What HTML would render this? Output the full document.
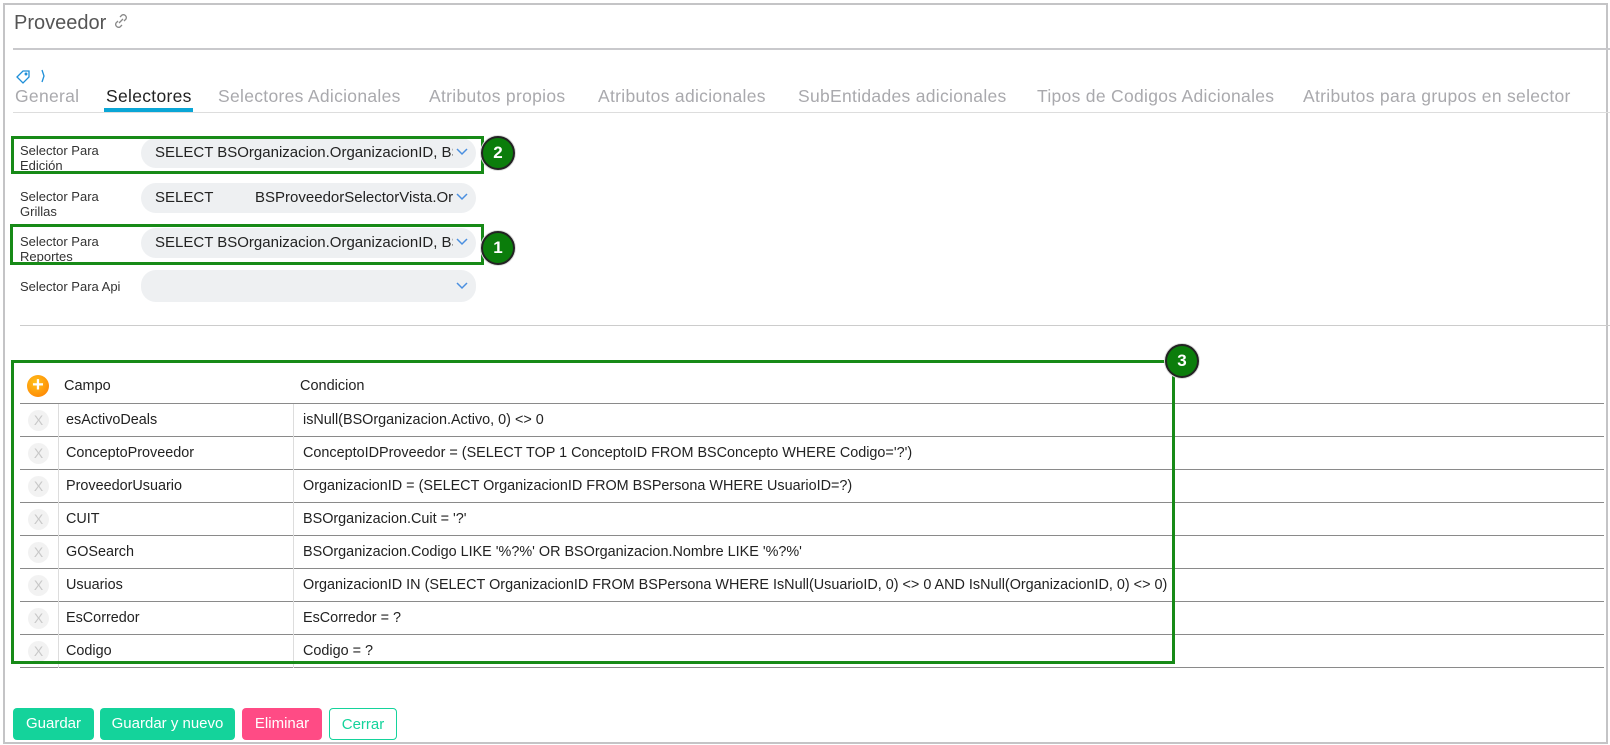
<!DOCTYPE html>
<html><head><meta charset="utf-8"><style>
*{box-sizing:border-box;margin:0;padding:0}
body{width:1610px;height:745px;background:#fff;font-family:"Liberation Sans",sans-serif;position:relative;overflow:hidden}
.abs{position:absolute}
.outer{left:3px;top:3px;width:1605px;height:741px;border:2px solid #c4c4c6;border-right:2px solid #c4c4c6}
.tab{position:absolute;top:86px;font-size:17.5px;color:#a9a9ad;white-space:nowrap;letter-spacing:0.3px}
.lbl{position:absolute;left:20px;font-size:13px;color:#333;line-height:15px}
.pill{position:absolute;left:141px;width:335px;height:30px;background:#eef0f2;border-radius:15px;font-size:15px;color:#222;line-height:30px;padding-left:14px;overflow:hidden;white-space:nowrap}
.pill svg{position:absolute;right:8px;top:10px}
.pill .t{display:block;width:298px;overflow:hidden}
.gbox{position:absolute;border:3px solid #178a17}
.num{position:absolute;width:34px;height:34px;border-radius:50%;background:#0b7d0b;border:2px solid #222;box-shadow:0 0 0 1px #ddd;color:#fff;font-weight:bold;font-size:17px;text-align:center;line-height:30px}
.row{position:absolute;left:20px;width:1584px;height:33px;border-bottom:1px solid #8a8a8a;font-size:14.4px;color:#222}
.row .x{position:absolute;left:8px;top:6px;width:21px;height:21px;border-radius:50%;background:#f2f2f2;color:#c8c8c8;font-size:14px;text-align:center;line-height:21px}
.row .c1{position:absolute;left:46px;top:8px}
.row .c2{position:absolute;left:283px;top:8px;white-space:nowrap}
.row .s1{position:absolute;left:38px;top:0;height:33px;border-left:1px solid #ddd}
.row .s2{position:absolute;left:273px;top:0;height:33px;border-left:1px solid #ddd}
.btn{position:absolute;top:708px;height:32px;border-radius:4px;color:#fff;font-size:15px;line-height:32px;text-align:center}
</style></head><body>
<div class="abs outer"></div>
<div class="abs" style="left:14px;top:12px;font-size:20px;color:#555">Proveedor</div>
<svg class="abs" style="left:112px;top:12px" width="18" height="18" viewBox="0 0 18 18" fill="none" stroke="#888" stroke-width="1.3"><path d="M7 11l4-4M8 5l2-2a3 3 0 0 1 4 4l-2 2M10 13l-2 2a3 3 0 0 1-4-4l2-2"/></svg>
<div class="abs" style="left:13px;top:48px;width:1597px;height:2px;background:#c9c9cc"></div>
<svg class="abs" style="left:15px;top:68px" width="32" height="16" viewBox="0 0 32 16" fill="none" stroke="#1e8fd8" stroke-width="1.3"><path d="M2 9l6-6h6v6l-6 6z"/><circle cx="11" cy="6" r="0.8"/><path d="M27 2l2 6-2 6"/></svg>
<div class="tab" style="left:15px">General</div>
<div class="tab" style="left:106px;color:#222">Selectores</div>
<div class="abs" style="left:104px;top:108px;width:89px;height:4px;background:#0aa6d6"></div>
<div class="tab" style="left:218px">Selectores Adicionales</div>
<div class="tab" style="left:429px">Atributos propios</div>
<div class="tab" style="left:598px">Atributos adicionales</div>
<div class="tab" style="left:798px">SubEntidades adicionales</div>
<div class="tab" style="left:1037px">Tipos de Codigos Adicionales</div>
<div class="tab" style="left:1303px">Atributos para grupos en selector</div>
<div class="abs" style="left:13px;top:112px;width:1597px;height:1px;background:#ddd"></div>

<div class="lbl" style="top:143px">Selector Para<br>Edición</div>
<div class="pill" style="top:138px"><span class="t">SELECT BSOrganizacion.OrganizacionID, BSOrganizacion</span><svg width="12" height="8" viewBox="0 0 12 8" fill="none" stroke="#4a8fe0" stroke-width="1.5"><path d="M1 1l5 5 5-5"/></svg></div>
<div class="lbl" style="top:189px">Selector Para<br>Grillas</div>
<div class="pill" style="top:183px"><span class="t">SELECT&nbsp;&nbsp;&nbsp;&nbsp;&nbsp;&nbsp;&nbsp;&nbsp;&nbsp;&nbsp;BSProveedorSelectorVista.Organizacion</span><svg width="12" height="8" viewBox="0 0 12 8" fill="none" stroke="#4a8fe0" stroke-width="1.5"><path d="M1 1l5 5 5-5"/></svg></div>
<div class="lbl" style="top:234px">Selector Para<br>Reportes</div>
<div class="pill" style="top:228px"><span class="t">SELECT BSOrganizacion.OrganizacionID, BSOrganizacion</span><svg width="12" height="8" viewBox="0 0 12 8" fill="none" stroke="#4a8fe0" stroke-width="1.5"><path d="M1 1l5 5 5-5"/></svg></div>
<div class="lbl" style="top:279px">Selector Para Api</div>
<div class="pill" style="top:270px;height:32px"><span class="t"></span><svg width="12" height="8" viewBox="0 0 12 8" fill="none" stroke="#4a8fe0" stroke-width="1.5" style="top:12px"><path d="M1 1l5 5 5-5"/></svg></div>

<div class="gbox" style="left:11px;top:136px;width:473px;height:38px"></div>
<div class="num" style="left:481px;top:136px">2</div>
<div class="gbox" style="left:10px;top:224px;width:474px;height:41px"></div>
<div class="num" style="left:481px;top:231px">1</div>

<div class="abs" style="left:20px;top:325px;width:1590px;height:1px;background:#ccc"></div>

<div class="abs" style="left:27px;top:375px;width:22px;height:22px;border-radius:50%;background:radial-gradient(circle at 40% 35%,#ffc21a,#ff7a00);color:#fff;font-size:20px;line-height:21px;text-align:center;font-weight:bold">+</div>
<div class="abs" style="left:64px;top:378px;font-size:14.5px;color:#222">Campo</div>
<div class="abs" style="left:300px;top:378px;font-size:14.5px;color:#222">Condicion</div>
<div class="abs" style="left:20px;top:403px;width:1584px;height:1px;background:#8a8a8a"></div>

<div class="row" style="top:404px"><span class="x">X</span><span class="s1"></span><span class="c1">esActivoDeals</span><span class="s2"></span><span class="c2">isNull(BSOrganizacion.Activo, 0) &lt;&gt; 0</span></div>
<div class="row" style="top:437px"><span class="x">X</span><span class="s1"></span><span class="c1">ConceptoProveedor</span><span class="s2"></span><span class="c2">ConceptoIDProveedor = (SELECT TOP 1 ConceptoID FROM BSConcepto WHERE Codigo='?')</span></div>
<div class="row" style="top:470px"><span class="x">X</span><span class="s1"></span><span class="c1">ProveedorUsuario</span><span class="s2"></span><span class="c2">OrganizacionID = (SELECT OrganizacionID FROM BSPersona WHERE UsuarioID=?)</span></div>
<div class="row" style="top:503px"><span class="x">X</span><span class="s1"></span><span class="c1">CUIT</span><span class="s2"></span><span class="c2">BSOrganizacion.Cuit = '?'</span></div>
<div class="row" style="top:536px"><span class="x">X</span><span class="s1"></span><span class="c1">GOSearch</span><span class="s2"></span><span class="c2">BSOrganizacion.Codigo LIKE '%?%' OR BSOrganizacion.Nombre LIKE '%?%'</span></div>
<div class="row" style="top:569px"><span class="x">X</span><span class="s1"></span><span class="c1">Usuarios</span><span class="s2"></span><span class="c2">OrganizacionID IN (SELECT OrganizacionID FROM BSPersona WHERE IsNull(UsuarioID, 0) &lt;&gt; 0 AND IsNull(OrganizacionID, 0) &lt;&gt; 0)</span></div>
<div class="row" style="top:602px"><span class="x">X</span><span class="s1"></span><span class="c1">EsCorredor</span><span class="s2"></span><span class="c2">EsCorredor = ?</span></div>
<div class="row" style="top:635px"><span class="x">X</span><span class="s1"></span><span class="c1">Codigo</span><span class="s2"></span><span class="c2">Codigo = ?</span></div>

<div class="gbox" style="left:11px;top:360px;width:1164px;height:304px"></div>
<div class="num" style="left:1165px;top:344px">3</div>

<div class="btn" style="left:13px;width:81px;background:#14d39b">Guardar</div>
<div class="btn" style="left:100px;width:135px;background:#14d39b">Guardar y nuevo</div>
<div class="btn" style="left:242px;width:80px;background:#ff4b85">Eliminar</div>
<div class="btn" style="left:329px;width:68px;background:#fff;border:1px solid #14d39b;color:#14d39b">Cerrar</div>
</body></html>
